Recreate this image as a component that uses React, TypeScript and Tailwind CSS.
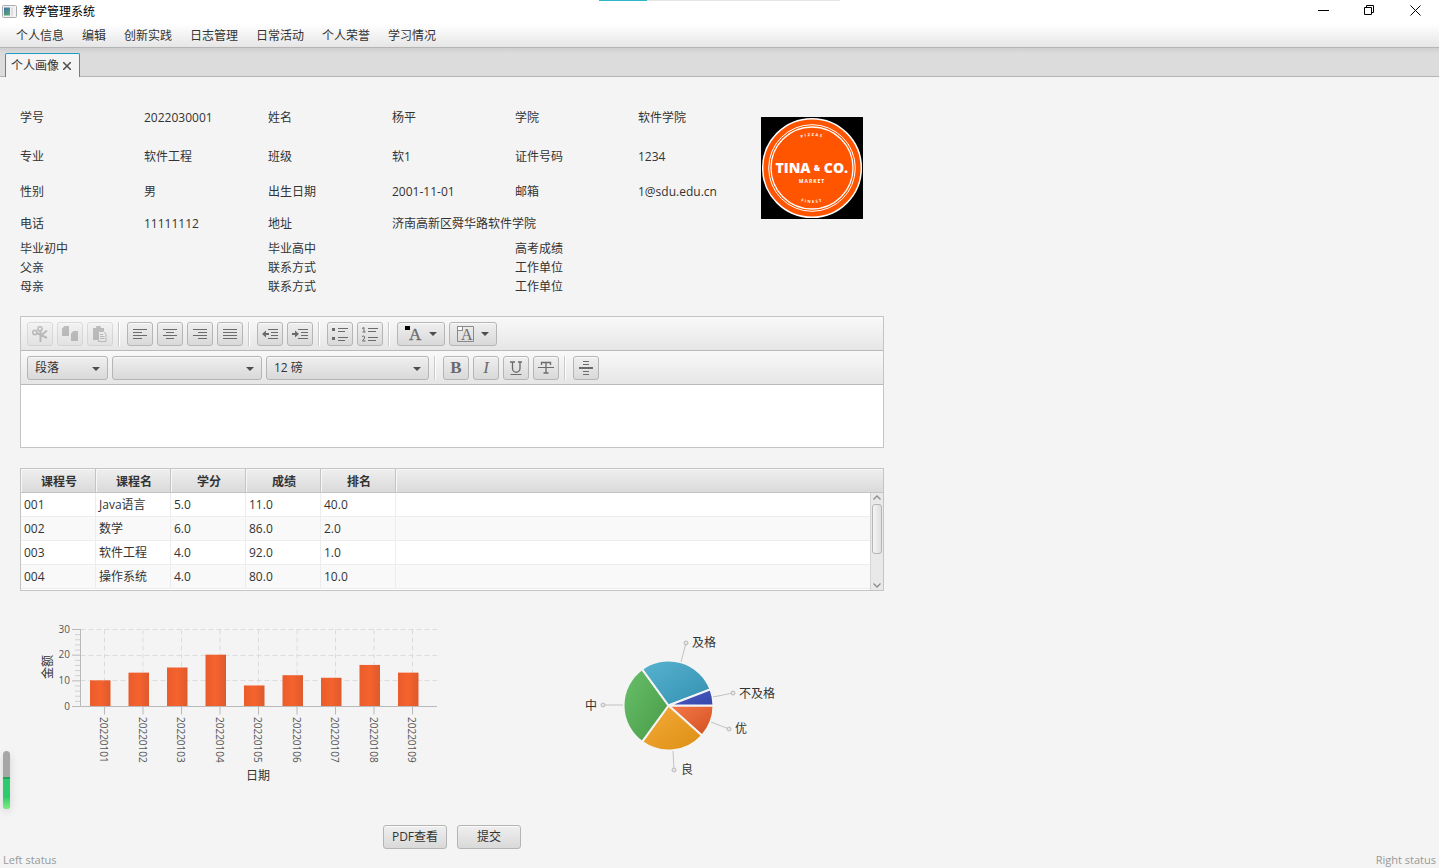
import type { ReactNode } from "react";

const MENUS = ["个人信息", "编辑", "创新实践", "日志管理", "日常活动", "个人荣誉", "学习情况"];

const PROFILE_ROWS = [
  ["学号", "2022030001", "姓名", "杨平", "学院", "软件学院"],
  ["专业", "软件工程", "班级", "软1", "证件号码", "1234"],
  ["性别", "男", "出生日期", "2001-11-01", "邮箱", "1@sdu.edu.cn"],
  ["电话", "11111112", "地址", "济南高新区舜华路软件学院", "", ""],
  ["毕业初中", "", "毕业高中", "", "高考成绩", ""],
  ["父亲", "", "联系方式", "", "工作单位", ""],
  ["母亲", "", "联系方式", "", "工作单位", ""],
];

const COURSE_HEADERS = ["课程号", "课程名", "学分", "成绩", "排名"];

const COURSES = [
  ["001", "Java语言", "5.0", "11.0", "40.0"],
  ["002", "数学", "6.0", "86.0", "2.0"],
  ["003", "软件工程", "4.0", "92.0", "1.0"],
  ["004", "操作系统", "4.0", "80.0", "10.0"],
];

const EXPENSES = [
  { day: "20220101", amount: 10 },
  { day: "20220102", amount: 13 },
  { day: "20220103", amount: 15 },
  { day: "20220104", amount: 20 },
  { day: "20220105", amount: 8 },
  { day: "20220106", amount: 12 },
  { day: "20220107", amount: 11 },
  { day: "20220108", amount: 16 },
  { day: "20220109", amount: 13 },
];

// angles in degrees, clockwise from three o'clock
const SLICES = [
  { name: "优", start: 0, end: 42, from: "#f5794b", to: "#d3501f", line: [259, 111, 277, 118], text: [283, 122] },
  { name: "良", start: 42, end: 126, from: "#f5ab3c", to: "#dc8f12", line: [221, 140, 222, 159], text: [229, 163] },
  { name: "中", start: 126, end: 234, from: "#69bf69", to: "#489b48", line: [171, 94, 151, 94], text: [133, 99] },
  { name: "及格", start: 234, end: 339, from: "#58b3d0", to: "#3290af", line: [229, 51, 234, 32], text: [240, 36] },
  { name: "不及格", start: 339, end: 360, from: "#4c60c9", to: "#3546a8", line: [261, 86, 281, 82], text: [287, 87] },
];

const BUTTON =
  "rounded-[3px] border border-[#b5b5b5] bg-linear-to-b from-[#efefef] to-[#d9d9d9] shadow-[inset_0_1px_0_#fafafa]";

const Logo = () => (
  <svg viewBox="0 0 102 102" className="w-[102px] h-[102px]" role="img" aria-label="头像">
    <rect width="102" height="102" fill="#000" />
    <circle cx="51" cy="51" r="49.3" fill="#ff5400" stroke="#fff" strokeWidth="1.5" />
    <circle cx="51" cy="51" r="43.3" fill="none" stroke="#fff" strokeWidth="1" />
    <circle cx="51" cy="51" r="41" fill="none" stroke="#fff" strokeWidth="1.3" />
    <path id="arc-top" d="M19 51a32 32 0 0 1 64 0" fill="none" />
    <path id="arc-bottom" d="M16 51a35 35 0 0 0 70 0" fill="none" />
    <g fill="#fff" fontFamily="Open Sans, sans-serif" fontWeight="700" textAnchor="middle">
      <text fontSize="4" letterSpacing="1.5">
        <textPath href="#arc-top" startOffset="50%">PIZZAS</textPath>
      </text>
      <text fontSize="4" letterSpacing="1.5">
        <textPath href="#arc-bottom" startOffset="50%">FINEST</textPath>
      </text>
      <text x="51" y="66" fontSize="5" letterSpacing="1">MARKET</text>
      <text x="32" y="56" fontSize="14" fontWeight="800">TINA</text>
      <text x="56" y="54" fontSize="8" fontWeight="800">&amp;</text>
      <text x="75" y="56" fontSize="14" fontWeight="800">CO.</text>
    </g>
  </svg>
);

const Icon = ({ children }: { children: ReactNode }) => (
  <svg viewBox="0 0 16 16" className="w-4 h-4" fill="none" stroke="#6b6b6b" strokeWidth="1" aria-hidden="true">
    {children}
  </svg>
);

interface ToolButtonProps {
  label: string;
  disabled?: boolean;
  children: ReactNode;
}

const ToolButton = ({ label, disabled, children }: ToolButtonProps) => (
  <button
    type="button"
    aria-label={label}
    disabled={disabled}
    className={`${BUTTON} flex w-[26px] h-6 shrink-0 items-center justify-center disabled:opacity-40`}
  >
    <Icon>{children}</Icon>
  </button>
);

const Separator = () => (
  <div className="w-[6px] h-6 shrink-0 pl-px">
    <div className="w-[2px] h-full border-l border-r border-l-[#c9c9c9] border-r-white" />
  </div>
);

const Arrow = () => (
  <svg viewBox="0 0 8 4" className="w-2 h-1" aria-hidden="true">
    <path d="M0 0h8L4 4z" fill="#4d4d4d" />
  </svg>
);

const ColorButton = ({ label, children }: { label: string; children: ReactNode }) => (
  <button type="button" aria-label={label} className={`${BUTTON} flex w-12 h-6 shrink-0 items-center justify-between px-[7px]`}>
    <svg viewBox="0 0 18 18" className="w-[18px] h-[18px]" aria-hidden="true">
      {children}
    </svg>
    <Arrow />
  </button>
);

const ToolSelect = ({ label, value, width }: { label: string; value: string; width: string }) => (
  <div className={`relative h-6 shrink-0 ${width}`}>
    <select aria-label={label} className={`${BUTTON} w-full h-full appearance-none pt-px pl-[7px] pr-6 leading-4`}>
      <option>{value}</option>
    </select>
    <div className="pointer-events-none absolute right-2 top-[11px]">
      <Arrow />
    </div>
  </div>
);

const Editor = () => (
  <section className="border border-[#c4c4c4] bg-white">
    <div className="flex h-[34px] items-center gap-1 border-b border-[#b9b9b9] bg-linear-to-b from-[#f9f9f9] to-[#e6e6e6] px-[6px]">
      <ToolButton label="剪切" disabled>
        <circle cx="2.8" cy="6.5" r="2.1" strokeWidth="1.6" />
        <circle cx="8" cy="2.8" r="2.1" strokeWidth="1.6" />
        <path d="M4.800 7 15 12M8.500 5v11M9.500 9l5.500-4.500" strokeWidth="2" />
      </ToolButton>
      <ToolButton label="复制" disabled>
        <path d="M0 2.500 2.500 0H7v10H0zM9 7.500l2.500-2.500H16v10H9z" fill="#6b6b6b" stroke="none" />
      </ToolButton>
      <ToolButton label="粘贴" disabled>
        <path d="M1 2h3a2.500 2.500 0 0 1 5 0h3v3H6v9H1z" fill="#6b6b6b" stroke="none" />
        <path d="M6.500 5.500h5L14 8v7.500H6.500zM8 8.500h3M8 10.500h4.500M8 12.500h4.500" />
      </ToolButton>
      <Separator />
      <ToolButton label="左对齐">
        <path d="M1 3.500h14M1 6.500h9M1 9.500h14M1 12.500h9" />
      </ToolButton>
      <ToolButton label="居中">
        <path d="M1 3.500h14M4 6.500h8M1 9.500h14M4 12.500h8" />
      </ToolButton>
      <ToolButton label="右对齐">
        <path d="M1 3.500h14M6 6.500h9M1 9.500h14M6 12.500h9" />
      </ToolButton>
      <ToolButton label="两端对齐">
        <path d="M1 3.500h14M1 6.500h14M1 9.500h14M1 12.500h14" />
      </ToolButton>
      <Separator />
      <ToolButton label="减少缩进">
        <path d="M0 8l4-3.500V7h3v2H4v2.500z" fill="#6b6b6b" stroke="none" />
        <path d="M6 3.500h10M9 6.500h7M9 9.500h7M6 12.500h10" />
      </ToolButton>
      <ToolButton label="增加缩进">
        <path d="M7 8 3 4.500V7H0v2h3v2.500z" fill="#6b6b6b" stroke="none" />
        <path d="M6 3.500h10M9 6.500h7M9 9.500h7M6 12.500h10" />
      </ToolButton>
      <Separator />
      <ToolButton label="项目符号">
        <path d="M0 2h3v3H0zM0 11h3v3H0z" fill="#6b6b6b" stroke="none" />
        <path d="M6 2.500h11M6 5.500h7M6 11.500h11M6 14.500h7" />
      </ToolButton>
      <ToolButton label="编号">
        <path d="M0 2.500 2 1.500V6M.500 6h3M0 10.500q1.500-1 2.500 0t-2 4.500h3" />
        <path d="M6 2.500h10M6 5.500h8M6 11.500h10M6 14.500h8" />
      </ToolButton>
      <Separator />
      <ColorButton label="文字颜色">
        <text x="4" y="15" fontSize="17" fontFamily="Liberation Serif, serif" fill="#6b6b6b" stroke="#6b6b6b" strokeWidth=".3">A</text>
        <rect x="0" y="1" width="5" height="4" fill="#000" />
      </ColorButton>
      <ColorButton label="背景颜色">
        <path d="M6 1.500h10.500v15H.500V6" fill="none" stroke="#8a8a8a" />
        <text x="4" y="15" fontSize="16" fontFamily="Liberation Serif, serif" fill="#6b6b6b">A</text>
        <rect x=".5" y="1.500" width="5" height="4" fill="#fff" stroke="#8a8a8a" />
      </ColorButton>
    </div>
    <div className="flex h-[34px] items-center gap-1 border-b border-[#b9b9b9] bg-linear-to-b from-[#f9f9f9] to-[#e6e6e6] px-[6px]">
      <ToolSelect label="段落格式" value="段落" width="w-[81px]" />
      <ToolSelect label="字体" value="" width="w-[150px]" />
      <ToolSelect label="字号" value="12 磅" width="w-[163px]" />
      <Separator />
      <button type="button" aria-label="加粗" className={`${BUTTON} w-[26px] h-6 font-['Liberation_Serif',serif] text-[17px] leading-5 font-bold text-[#6b6b6b]`}>
        B
      </button>
      <button type="button" aria-label="斜体" className={`${BUTTON} w-[26px] h-6 font-['Liberation_Serif',serif] text-[17px] leading-5 italic text-[#6b6b6b]`}>
        I
      </button>
      <ToolButton label="下划线">
        <path d="M2 2h5M10 2h4M4.500 2v6.500a3.500 3.500 0 0 0 7.500 0V2" strokeWidth="1.300" />
        <path d="M2.500 14.500h11" />
      </ToolButton>
      <ToolButton label="删除线">
        <path d="M3.500 5V2.500h9V5M8 2.500v10.500M5.500 13h5" strokeWidth="1.300" />
        <path d="M0 7.500h16" />
      </ToolButton>
      <Separator />
      <ToolButton label="插入水平线">
        <path d="M5 1.500h6M5 4.500h6M5 11.500h6M5 14.500h6" />
        <path d="M1 8h14" strokeWidth="2" />
      </ToolButton>
    </div>
    <textarea aria-label="个人简介" className="block w-full h-[62px] resize-none bg-white p-2 outline-none" />
  </section>
);

const ScrollBar = () => (
  <div className="absolute right-0 top-6 bottom-0 flex w-[13px] flex-col items-center justify-between border-l border-[#d4d4d4] bg-[#e9e9e9] py-[2px]">
    <svg viewBox="0 0 8 5" className="w-2 h-[5px]" fill="none" stroke="#8c8c8c" strokeWidth="1.300" aria-hidden="true">
      <path d="M.5 4.500 4 1l3.500 3.500" />
    </svg>
    <div className="mt-1 mb-auto h-[50px] w-[10px] rounded-[3px] border border-[#b5b5b5] bg-linear-to-r from-[#f5f5f5] to-[#dedede]" />
    <svg viewBox="0 0 8 5" className="w-2 h-[5px]" fill="none" stroke="#8c8c8c" strokeWidth="1.300" aria-hidden="true">
      <path d="M.5.500 4 4 7.500.500" />
    </svg>
  </div>
);

const CourseTable = () => (
  <div className="relative overflow-hidden border border-[#c4c4c4] bg-white pb-px">
    <table className="w-full table-fixed border-separate border-spacing-0">
      <thead>
        <tr className="h-6 bg-linear-to-b from-[#efefef] to-[#d9d9d9]">
          {COURSE_HEADERS.map((header) => (
            <th
              key={header}
              className="w-[75px] border-r border-b border-[#c4c4c4] pt-[2px] pr-0 pb-0 pl-[2px] font-bold shadow-[inset_1px_1px_0_#f7f7f7]"
            >
              {header}
            </th>
          ))}
          <th className="border-b border-[#c4c4c4] p-0 shadow-[inset_1px_1px_0_#f7f7f7]" />
        </tr>
      </thead>
      <tbody>
        {COURSES.map((course) => (
          <tr key={course[0]} className="h-6 even:bg-[#f9f9f9]">
            {course.map((value, i) => (
              <td key={i} className="border-r border-b border-[#ededed] py-0 pl-[3px] pr-0">
                {value}
              </td>
            ))}
            <td className="border-b border-[#ededed] p-0" />
          </tr>
        ))}
      </tbody>
    </table>
    <ScrollBar />
  </div>
);

const AXIS_LEFT = 60.5;
const AXIS_BOTTOM = 95.5;
const UNIT = 77 / 30;
const tickX = (i: number) => 84.5 + i * 38.5;

const BarChart = () => (
  <svg viewBox="0 0 432 200" className="w-1/2 h-[200px]" role="img" aria-label="日期金额柱状图">
    <defs>
      <linearGradient id="bar">
        <stop offset="0" stopColor="#ea5c2b" />
        <stop offset=".5" stopColor="#f5632e" />
        <stop offset="1" stopColor="#de5a2c" />
      </linearGradient>
    </defs>
    <g stroke="#dcdcdc" strokeDasharray="5 3">
      {[10, 20, 30].map((v) => (
        <path key={v} d={`M${AXIS_LEFT} ${Math.floor(AXIS_BOTTOM - v * UNIT) + 0.5}H417`} />
      ))}
      {EXPENSES.map((e, i) => (
        <path key={e.day} d={`M${tickX(i)} ${AXIS_BOTTOM}V18`} />
      ))}
    </g>
    <g stroke="#b9b9b9">
      <path d={`M${AXIS_LEFT} 18V${AXIS_BOTTOM}H417`} fill="none" />
      {[0, 10, 20, 30].map((v) => (
        <path key={v} d={`M52 ${AXIS_BOTTOM - v * UNIT}h8`} />
      ))}
      {EXPENSES.map((e, i) => (
        <path key={e.day} d={`M${tickX(i)} ${AXIS_BOTTOM}v8`} />
      ))}
      {[2, 4, 6, 8, 12, 14, 16, 18, 22, 24, 26, 28].map((v) => (
        <path key={v} d={`M55 ${AXIS_BOTTOM - v * UNIT}h5`} stroke="#cfcfcf" />
      ))}
    </g>
    {EXPENSES.map((e, i) => (
      <rect
        key={e.day}
        x={tickX(i) - 14.5}
        y={AXIS_BOTTOM - e.amount * UNIT - 0.5}
        width="20.5"
        height={e.amount * UNIT}
        fill="url(#bar)"
      />
    ))}
    <g fontSize="10" fill="#565656">
      {[0, 10, 20, 30].map((v) => (
        <text key={v} x="50" y={AXIS_BOTTOM - v * UNIT + 3} textAnchor="end">
          {v}
        </text>
      ))}
      {EXPENSES.map((e, i) => (
        <text key={e.day} transform={`translate(${tickX(i) - 4.5} 106) rotate(90)`}>
          {e.day}
        </text>
      ))}
    </g>
    <g fontSize="12" fill="#333" textAnchor="middle">
      <text transform="translate(32 56) rotate(-90)">金额</text>
      <text x="238" y="169">日期</text>
    </g>
  </svg>
);

const slicePath = (start: number, end: number) => {
  const [cx, cy, r] = [216.5, 94.5, 45];
  const point = (deg: number) => {
    const rad = (deg * Math.PI) / 180;
    return `${cx + r * Math.cos(rad)} ${cy + r * Math.sin(rad)}`;
  };
  return `M${cx} ${cy}L${point(start)}A${r} ${r} 0 0 1 ${point(end)}Z`;
};

const PieChart = () => (
  <svg viewBox="0 0 432 200" className="w-1/2 h-[200px]" role="img" aria-label="成绩分布饼图">
    {SLICES.map((slice, i) => (
      <g key={slice.name}>
        <linearGradient id={`slice-${i}`} x1="0" y1="0" x2="1" y2="1">
          <stop offset="0" stopColor={slice.from} />
          <stop offset="1" stopColor={slice.to} />
        </linearGradient>
        <path d={slicePath(slice.start, slice.end)} fill={`url(#slice-${i})`} stroke="#f4f4f4" strokeWidth="2" />
        <path d={`M${slice.line[0]} ${slice.line[1]}L${slice.line[2]} ${slice.line[3]}`} stroke="#c2c2c2" />
        <circle cx={slice.line[2]} cy={slice.line[3]} r="2" fill="#e6e6e6" stroke="#b9b9b9" />
        <text x={slice.text[0]} y={slice.text[1]} fontSize="12" fill="#333">
          {slice.name}
        </text>
      </g>
    ))}
  </svg>
);

const TitleBar = () => (
  <header className="flex h-6 items-center bg-white text-black">
    <svg viewBox="0 0 16 14" className="ml-[2px] w-4 h-[14px]" aria-hidden="true">
      <defs>
        <linearGradient id="app" x2=".6" y2="1">
          <stop offset="0" stopColor="#3f6fa5" />
          <stop offset="1" stopColor="#57a57a" />
        </linearGradient>
      </defs>
      <rect x=".5" y=".5" width="14" height="12" rx="1" fill="#f2f2f2" stroke="#a9adb2" />
      <path d="M2 2.500h6v8H2z" fill="url(#app)" />
      <path d="M9 2.500h2v8H9z" fill="#dcdcdc" />
    </svg>
    <h1 className="ml-[5px] leading-4">教学管理系统</h1>
    <div className="ml-auto mr-px flex h-5 self-start">
      <button type="button" aria-label="最小化" className="flex w-[46px] items-center justify-center">
        <svg viewBox="0 0 11 11" className="w-[11px] h-[11px]" stroke="#000">
          <path d="M0 5.500h11" />
        </svg>
      </button>
      <button type="button" aria-label="还原" className="flex w-[46px] items-center justify-center">
        <svg viewBox="0 0 11 11" className="w-[11px] h-[11px]" fill="none" stroke="#000">
          <path d="M.5 2.500h7v7h-7zM2.500 2.500v-2h7v7h-2" />
        </svg>
      </button>
      <button type="button" aria-label="关闭" className="flex w-[46px] items-center justify-center">
        <svg viewBox="0 0 11 11" className="w-[11px] h-[11px]" stroke="#000">
          <path d="M.5.500l10 10M10.500.500l-10 10" />
        </svg>
      </button>
    </div>
  </header>
);

const App = () => {
  return (
    <div className="relative flex min-h-screen flex-col bg-[#f4f4f4] font-['Open_Sans','Noto_Sans_CJK_SC',sans-serif] text-[12px] leading-4 text-[#333]">
      <div className="absolute inset-x-0 top-0 mx-auto h-px w-[241px] bg-[#e5e5e5]">
        <div className="h-px w-12 bg-[#2db7cc]" />
      </div>
      <TitleBar />
      <nav className="flex h-6 items-center gap-[18px] border-b border-[#b5b5b5] bg-linear-to-b from-white to-[#e6e6e6] px-4">
        {MENUS.map((menu) => (
          <button key={menu} type="button">
            {menu}
          </button>
        ))}
      </nav>
      <div className="flex h-[29px] items-end bg-linear-to-b from-[#cfcfcf] to-[#dcdcdc] to-20% pl-[5px] shadow-[inset_0_-1px_0_#b5b5b5]">
        <div className="flex h-6 w-[75px] items-center gap-1 rounded-t-[2px] border-x border-t border-[#1f9cc2] bg-[#f4f4f4] pl-[5px]">
          <span>个人画像</span>
          <button type="button" aria-label="关闭标签页">
            <svg viewBox="0 0 8 8" className="w-2 h-2" stroke="#4d4d4d" strokeWidth="1.500">
              <path d="M0 0l8 8M8 0 0 8" />
            </svg>
          </button>
        </div>
      </div>

      <main className="w-full max-w-[904px] px-5 pt-5">
        <section className="grid grid-cols-[minmax(0,124fr)_minmax(0,124fr)_minmax(0,124fr)_minmax(0,123fr)_minmax(0,123fr)_minmax(0,123fr)_minmax(0,123fr)] grid-rows-[41px_37px_34px_29px_21px_18px_19px] items-center">
          {PROFILE_ROWS.map((row, r) =>
            row.map((text, c) => (
              <span key={`${r}-${c}`} className="whitespace-nowrap" style={{ gridRow: r + 1, gridColumn: c + 1 }}>
                {text}
              </span>
            ))
          )}
          <div className="col-start-7 row-start-1 row-span-4">
            <Logo />
          </div>
        </section>

        <div className="mt-5">
          <Editor />
        </div>
        <div className="mt-5">
          <CourseTable />
        </div>
        <div className="mt-5 flex">
          <BarChart />
          <PieChart />
        </div>
        <div className="mt-[14px] flex justify-center gap-[10px]">
          <button type="button" className={`${BUTTON} w-16 h-6`}>
            PDF查看
          </button>
          <button type="button" className={`${BUTTON} w-16 h-6`}>
            提交
          </button>
        </div>
      </main>

      <footer className="mt-auto flex justify-between px-[3px] text-[11px] text-[#999]">
        <span>Left status</span>
        <span>Right status</span>
      </footer>

      <div className="absolute left-[3px] bottom-[59px] h-[58px] w-[7px] overflow-hidden rounded-full bg-[#a6a6a6] shadow-[0_3px_8px_#0002]">
        <div className="mt-[26px] h-8 border-t-2 border-[#1ea55a] bg-linear-to-b from-[#2dcb6d] from-60% to-[#7df07f]" />
      </div>
    </div>
  );
};

export default App;
